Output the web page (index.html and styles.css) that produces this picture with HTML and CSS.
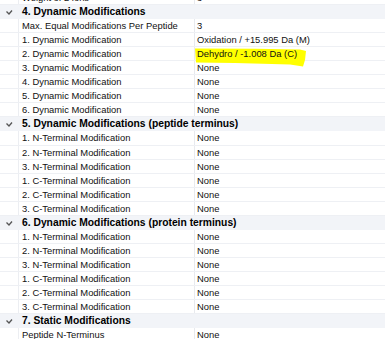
FILE: index.html
```html
<!DOCTYPE html>
<html>
<head>
<meta charset="utf-8">
<link rel="stylesheet" href="styles.css">
</head>
<body>
<div class="grid">
  <div class="row"><div class="gut"></div><div class="lbl">Weight of 2 ions</div><div class="val">3</div></div>
  <div class="sec"><svg class="chev" width="19" height="14" viewBox="0 0 19 14"><polyline points="6.5,6.5 9,9 12,5.5" fill="none" stroke="#555" stroke-width="1.3"/></svg><span>4. Dynamic Modifications</span></div>
  <div class="row"><div class="gut"></div><div class="lbl">Max. Equal Modifications Per Peptide</div><div class="val">3</div></div>
  <div class="row"><div class="gut"></div><div class="lbl">1. Dynamic Modification</div><div class="val">Oxidation / +15.995 Da (M)</div></div>
  <div class="row"><div class="gut"></div><div class="lbl">2. Dynamic Modification</div><div class="val hl"><svg class="marker" width="114" height="20" viewBox="0 0 114 20"><polygon points="0,0.5 60,0.8 105,1.5 111,3 110,12 108,18.5 95,16.5 40,15 1,14.5" fill="#ffff00"/></svg><span class="txt">Dehydro / -1.008 Da (C)</span></div></div>
  <div class="row"><div class="gut"></div><div class="lbl">3. Dynamic Modification</div><div class="val">None</div></div>
  <div class="row"><div class="gut"></div><div class="lbl">4. Dynamic Modification</div><div class="val">None</div></div>
  <div class="row"><div class="gut"></div><div class="lbl">5. Dynamic Modification</div><div class="val">None</div></div>
  <div class="row"><div class="gut"></div><div class="lbl">6. Dynamic Modification</div><div class="val">None</div></div>
  <div class="sec"><svg class="chev" width="19" height="14" viewBox="0 0 19 14"><polyline points="6.5,6.5 9,9 12,5.5" fill="none" stroke="#555" stroke-width="1.3"/></svg><span>5. Dynamic Modifications (peptide terminus)</span></div>
  <div class="row"><div class="gut"></div><div class="lbl">1. N-Terminal Modification</div><div class="val">None</div></div>
  <div class="row"><div class="gut"></div><div class="lbl">2. N-Terminal Modification</div><div class="val">None</div></div>
  <div class="row"><div class="gut"></div><div class="lbl">3. N-Terminal Modification</div><div class="val">None</div></div>
  <div class="row"><div class="gut"></div><div class="lbl">1. C-Terminal Modification</div><div class="val">None</div></div>
  <div class="row"><div class="gut"></div><div class="lbl">2. C-Terminal Modification</div><div class="val">None</div></div>
  <div class="row"><div class="gut"></div><div class="lbl">3. C-Terminal Modification</div><div class="val">None</div></div>
  <div class="sec"><svg class="chev" width="19" height="14" viewBox="0 0 19 14"><polyline points="6.5,6.5 9,9 12,5.5" fill="none" stroke="#555" stroke-width="1.3"/></svg><span>6. Dynamic Modifications (protein terminus)</span></div>
  <div class="row"><div class="gut"></div><div class="lbl">1. N-Terminal Modification</div><div class="val">None</div></div>
  <div class="row"><div class="gut"></div><div class="lbl">2. N-Terminal Modification</div><div class="val">None</div></div>
  <div class="row"><div class="gut"></div><div class="lbl">3. N-Terminal Modification</div><div class="val">None</div></div>
  <div class="row"><div class="gut"></div><div class="lbl">1. C-Terminal Modification</div><div class="val">None</div></div>
  <div class="row"><div class="gut"></div><div class="lbl">2. C-Terminal Modification</div><div class="val">None</div></div>
  <div class="row"><div class="gut"></div><div class="lbl">3. C-Terminal Modification</div><div class="val">None</div></div>
  <div class="sec"><svg class="chev" width="19" height="14" viewBox="0 0 19 14"><polyline points="6.5,6.5 9,9 12,5.5" fill="none" stroke="#555" stroke-width="1.3"/></svg><span>7. Static Modifications</span></div>
  <div class="row"><div class="gut"></div><div class="lbl">Peptide N-Terminus</div><div class="val">None</div></div>
</div>
</body>
</html>
```
FILE: styles.css
```css
html, body {
  margin: 0;
  padding: 0;
  background: #ffffff;
  overflow: hidden;
}
body {
  font-family: "Liberation Sans", Arial, sans-serif;
  color: #111;
}
.grid {
  margin-top: -9px;
  width: 385px;
}
.row {
  display: grid;
  grid-template-columns: 19px 176px 1fr;
  height: 14.05px;
  box-sizing: border-box;
  border-bottom: 1px solid #eef0f4;
  font-size: 9.4px;
  line-height: 13px;
}
.gut {
  border-right: 1px solid #eceef2;
}
.lbl {
  padding-left: 3px;
  border-right: 1px solid #e8eaee;
  white-space: nowrap;
  overflow: hidden;
}
.val {
  padding-left: 2px;
  white-space: nowrap;
  position: relative;
}
.sec {
  display: flex;
  align-items: center;
  height: 14.05px;
  background: #f2f4f8;
  font-size: 10.3px;
  font-weight: bold;
  color: #000;
  white-space: nowrap;
}
.chev {
  flex: none;
  display: block;
}
.sec span {
  padding-left: 3px;
  line-height: 14px;
}
.marker {
  position: absolute;
  left: 0;
  top: 1px;
  z-index: 1;
}
.txt {
  position: relative;
  z-index: 2;
}
```
